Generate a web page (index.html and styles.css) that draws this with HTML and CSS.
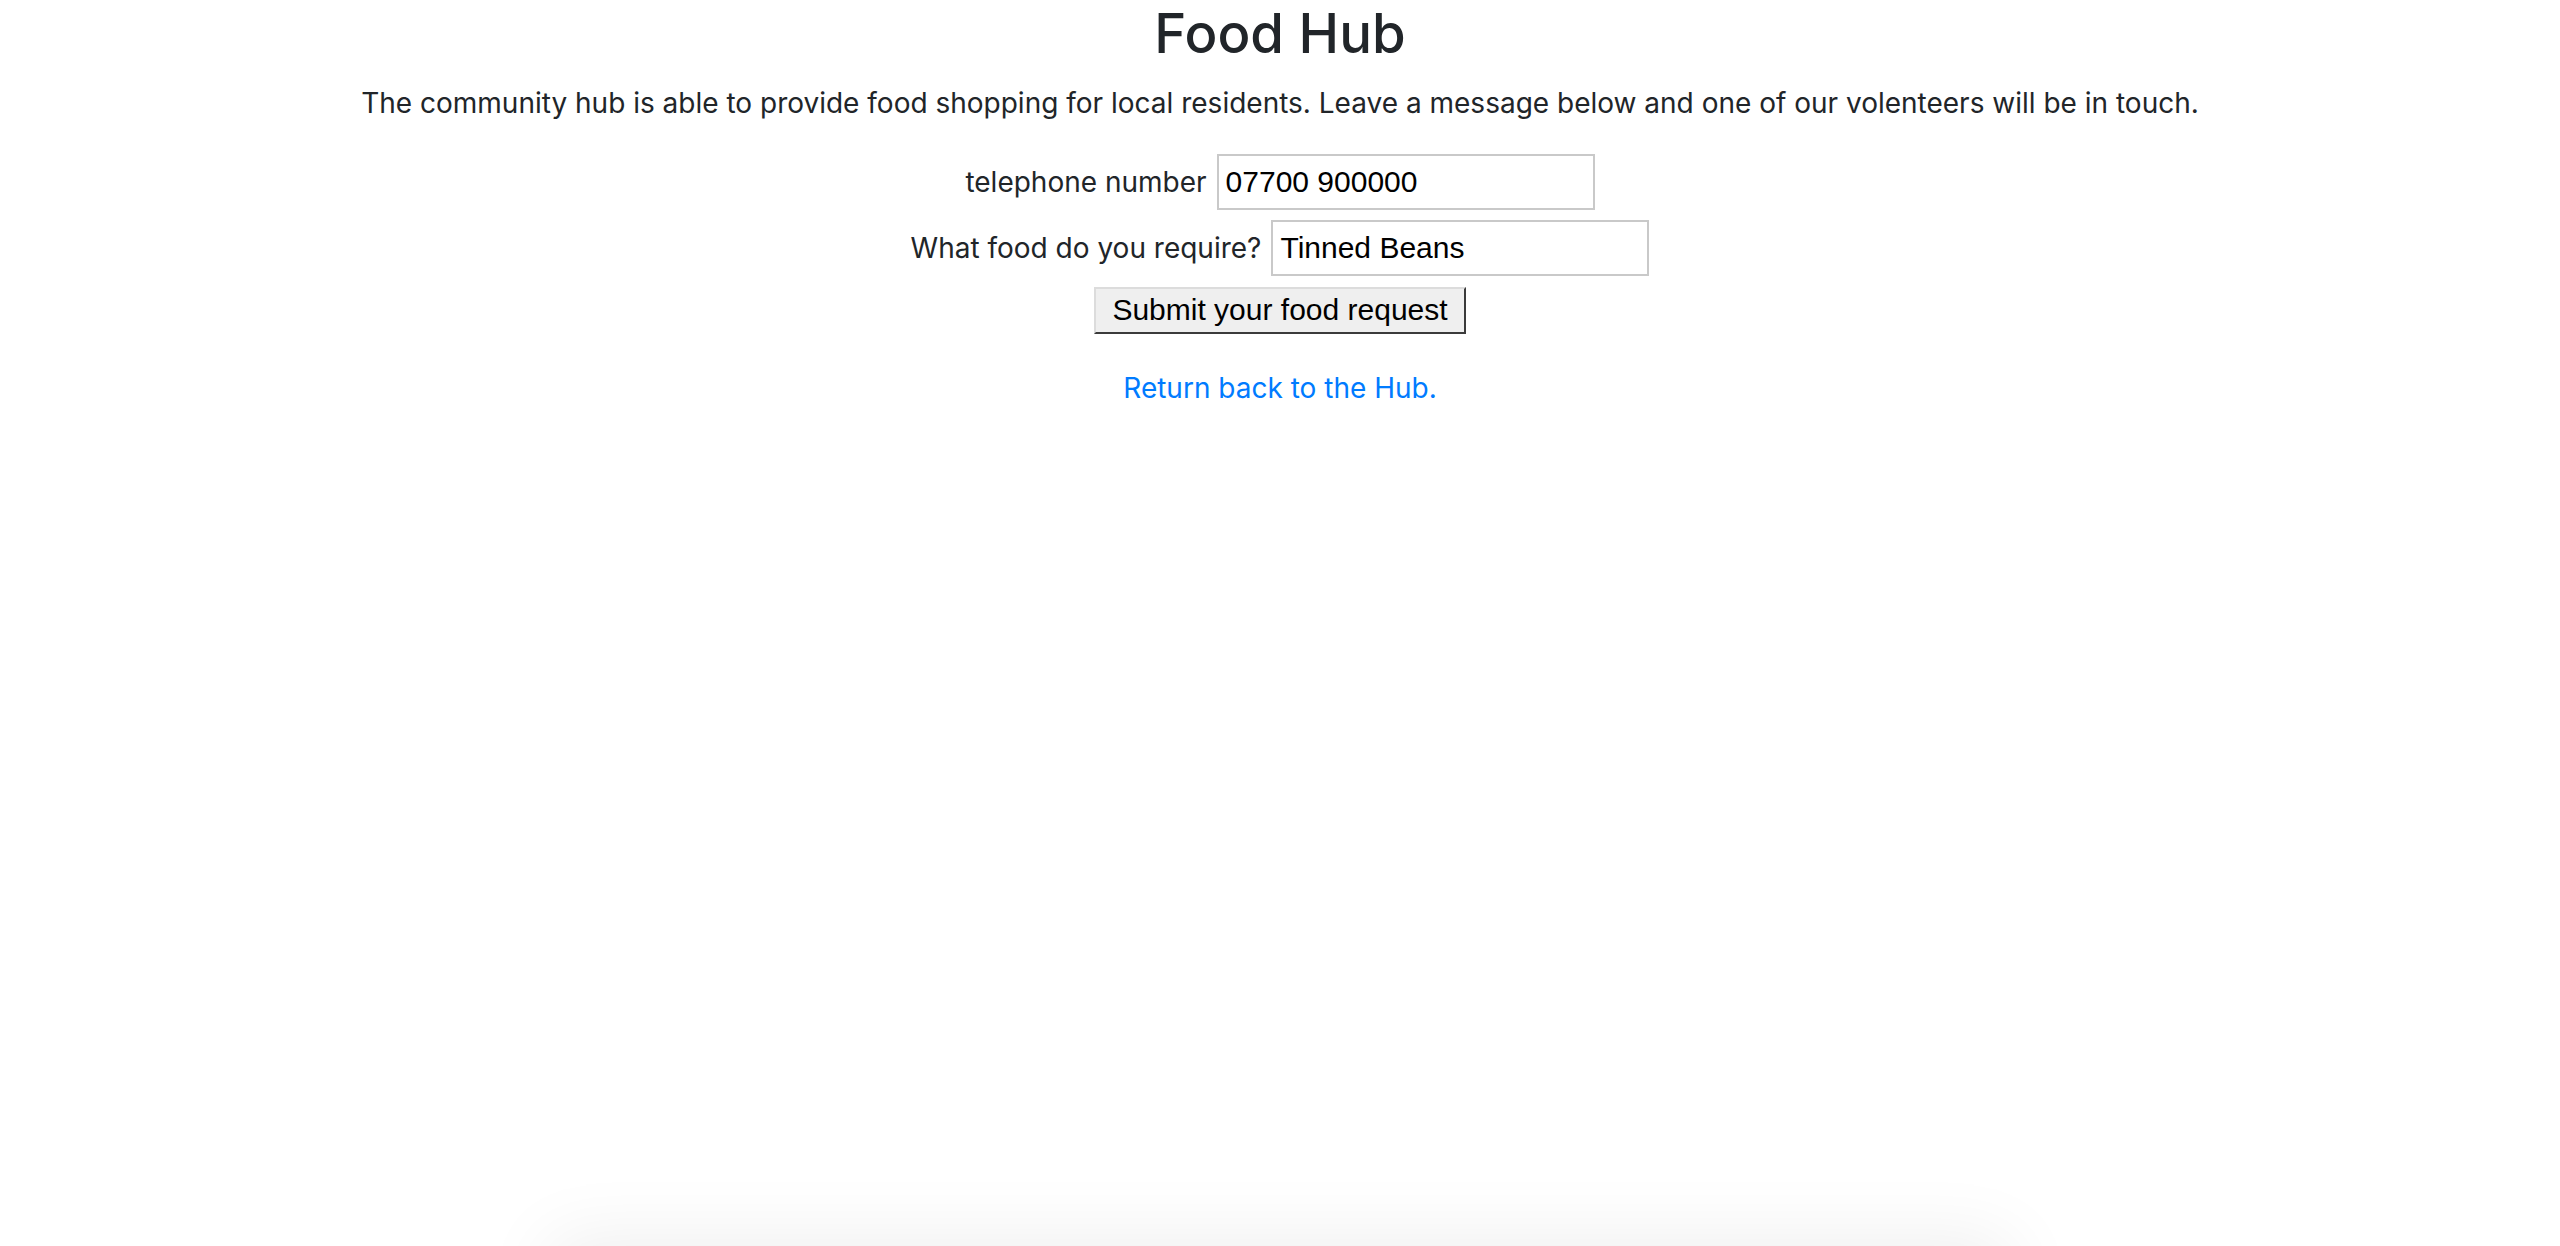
FILE: index.html
```html
<!DOCTYPE html>
<html lang="en">
<head>
<meta charset="utf-8">
<title>Food Hub</title>
<link rel="stylesheet" href="styles.css">
</head>
<body>
<main class="page">
  <h1 class="title">Food Hub</h1>
  <p class="intro">The community hub is able to provide food shopping for local residents. Leave a message below and one of our volenteers will be in touch.</p>
  <form class="request-form">
    <div class="field">
      <label class="field-label" for="tel">telephone number</label>
      <input class="field-input" id="tel" type="text" value="07700 900000">
    </div>
    <div class="field">
      <label class="field-label" for="food">What food do you require?</label>
      <input class="field-input" id="food" type="text" value="Tinned Beans">
    </div>
    <button class="submit" type="button">Submit your food request</button>
  </form>
  <p class="back"><a class="back-link" href="#">Return back to the Hub.</a></p>
</main>
<div class="bottom-shade"></div>
</body>
</html>
```

FILE: styles.css
```css
html, body {
  margin: 0;
  padding: 0;
  background: #ffffff;
}
body {
  font-family: Inter, "Liberation Sans", Arial, sans-serif;
  color: #212529;
  font-size: 28px;
  line-height: 1.5;
  overflow: hidden;
  height: 1246px;
  position: relative;
}
.page {
  display: flex;
  flex-direction: column;
  align-items: center;
  text-align: center;
}
.title {
  margin: 2px 0 17px;
  font-size: 54.5px;
  font-weight: 500;
  line-height: 1.15;
}
.intro {
  margin: 0 0 30px;
}
.request-form {
  display: flex;
  flex-direction: column;
  align-items: center;
  gap: 10px;
}
.field {
  display: flex;
  align-items: baseline;
  gap: 10px;
  height: 56px;
}
.field-label {
  color: #212529;
}
.field-input {
  box-sizing: border-box;
  width: 378px;
  height: 56px;
  border: 2px solid #c9c9c9;
  padding: 0 7px;
  font-family: "Liberation Sans", Arial, sans-serif;
  font-size: 30px;
  color: #000;
  background: #fff;
  outline: none;
}
.submit {
  margin-top: 1px;
  box-sizing: border-box;
  width: 372px;
  height: 47px;
  font-family: "Liberation Sans", Arial, sans-serif;
  font-size: 30px;
  color: #000;
  background: #efefef;
  border: 2px outset #a0a0a0;
  border-top-color: #dcdcdc;
  border-left-color: #dcdcdc;
  border-right-color: #8f8f8f;
  border-bottom-color: #8f8f8f;
  padding: 0 8px;
}
.back {
  margin: 33px 0 0;
}
.back-link {
  color: #007bff;
  text-decoration: none;
}
.bottom-shade {
  position: absolute;
  left: 560px;
  width: 1440px;
  top: 1250px;
  height: 200px;
  box-shadow: 0 0 70px 10px rgba(0, 0, 0, 0.07);
}
```
